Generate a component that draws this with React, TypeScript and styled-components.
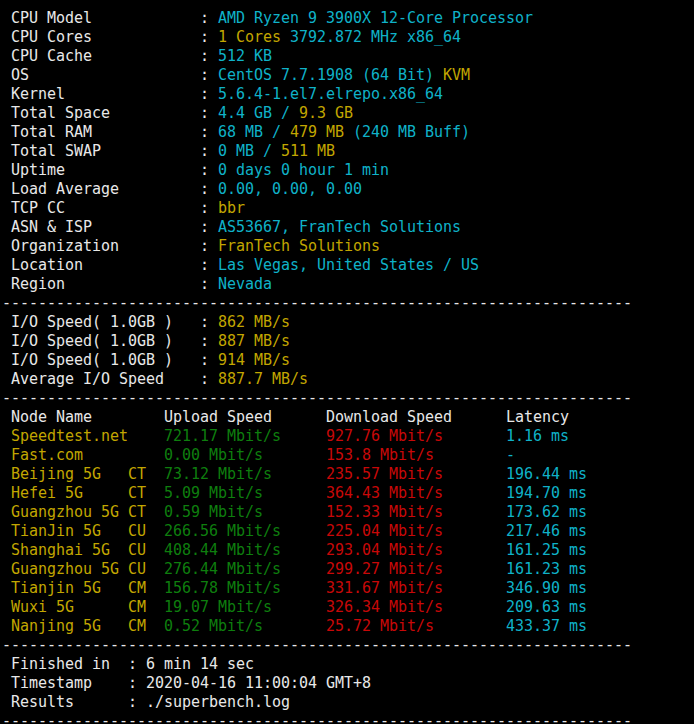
import React from "react";
import styled, { createGlobalStyle } from "styled-components";

const Global = createGlobalStyle`
  html, body { margin: 0; padding: 0; background: #000; }
  body { width: 694px; height: 724px; overflow: hidden; }
`;

type Tone = "white" | "cyan" | "yellow" | "green" | "red";

const palette: Record<Tone, string> = {
  white: "#e8e8e8",
  cyan: "#0fb2c8",
  yellow: "#c2a600",
  green: "#0e7e0e",
  red: "#c80808",
};

const Terminal = styled.div`
  background: #000;
  width: 694px;
  height: 724px;
  box-sizing: border-box;
  padding: 9px 0 0 2px;
  font-family: "DejaVu Sans Mono", "Liberation Mono", monospace;
  font-size: 15px;
  letter-spacing: -0.03px;
  line-height: 19px;
  color: ${palette.white};
  display: flex;
  flex-direction: column;
  overflow: hidden;
`;

const Line = styled.div`
  white-space: pre;
  height: 19px;
  flex-shrink: 0;
`;

const Seg = styled.span<{ $tone: Tone }>`
  color: ${(p) => palette[p.$tone]};
`;

type Part = [string, Tone];

const pad = (s: string, n: number) => s + " ".repeat(Math.max(0, n - s.length));

const info: [string, Part[]][] = [
  ["CPU Model", [["AMD Ryzen 9 3900X 12-Core Processor", "cyan"]]],
  ["CPU Cores", [["1 Cores ", "yellow"], ["3792.872 MHz x86_64", "cyan"]]],
  ["CPU Cache", [["512 KB", "cyan"]]],
  ["OS", [["CentOS 7.7.1908 (64 Bit) ", "cyan"], ["KVM", "yellow"]]],
  ["Kernel", [["5.6.4-1.el7.elrepo.x86_64", "cyan"]]],
  ["Total Space", [["4.4 GB / ", "cyan"], ["9.3 GB", "yellow"]]],
  ["Total RAM", [["68 MB / ", "cyan"], ["479 MB ", "yellow"], ["(240 MB Buff)", "cyan"]]],
  ["Total SWAP", [["0 MB / ", "cyan"], ["511 MB", "yellow"]]],
  ["Uptime", [["0 days 0 hour 1 min", "cyan"]]],
  ["Load Average", [["0.00, 0.00, 0.00", "cyan"]]],
  ["TCP CC", [["bbr", "yellow"]]],
  ["ASN & ISP", [["AS53667, FranTech Solutions", "cyan"]]],
  ["Organization", [["FranTech Solutions", "yellow"]]],
  ["Location", [["Las Vegas, United States / US", "cyan"]]],
  ["Region", [["Nevada", "cyan"]]],
];

const io: [string, string][] = [
  ["I/O Speed( 1.0GB )", "862 MB/s"],
  ["I/O Speed( 1.0GB )", "887 MB/s"],
  ["I/O Speed( 1.0GB )", "914 MB/s"],
  ["Average I/O Speed", "887.7 MB/s"],
];

const nodes: [string, string, string, string][] = [
  ["Speedtest.net", "721.17 Mbit/s", "927.76 Mbit/s", "1.16 ms"],
  ["Fast.com", "0.00 Mbit/s", "153.8 Mbit/s", "-"],
  ["Beijing 5G   CT", "73.12 Mbit/s", "235.57 Mbit/s", "196.44 ms"],
  ["Hefei 5G     CT", "5.09 Mbit/s", "364.43 Mbit/s", "194.70 ms"],
  ["Guangzhou 5G CT", "0.59 Mbit/s", "152.33 Mbit/s", "173.62 ms"],
  ["TianJin 5G   CU", "266.56 Mbit/s", "225.04 Mbit/s", "217.46 ms"],
  ["Shanghai 5G  CU", "408.44 Mbit/s", "293.04 Mbit/s", "161.25 ms"],
  ["Guangzhou 5G CU", "276.44 Mbit/s", "299.27 Mbit/s", "161.23 ms"],
  ["Tianjin 5G   CM", "156.78 Mbit/s", "331.67 Mbit/s", "346.90 ms"],
  ["Wuxi 5G      CM", "19.07 Mbit/s", "326.34 Mbit/s", "209.63 ms"],
  ["Nanjing 5G   CM", "0.52 Mbit/s", "25.72 Mbit/s", "433.37 ms"],
];

const footer: [string, string][] = [
  ["Finished in", "6 min 14 sec"],
  ["Timestamp", "2020-04-16 11:00:04 GMT+8"],
  ["Results", "./superbench.log"],
];

const Rule = () => <Line>{"-".repeat(70)}</Line>;

export default function App() {
  return (
    <>
      <Global />
      <Terminal>
        {info.map(([label, parts], i) => (
          <Line key={"i" + i}>
            {" " + pad(label, 21) + ": "}
            {parts.map(([t, tone], j) => (
              <Seg key={j} $tone={tone}>
                {t}
              </Seg>
            ))}
          </Line>
        ))}
        <Rule />
        {io.map(([label, v], i) => (
          <Line key={"o" + i}>
            {" " + pad(label, 21) + ": "}
            <Seg $tone="yellow">{v}</Seg>
          </Line>
        ))}
        <Rule />
        <Line>
          {" " + pad("Node Name", 17) + pad("Upload Speed", 18) + pad("Download Speed", 20) + "Latency"}
        </Line>
        {nodes.map(([n, up, down, lat], i) => (
          <Line key={"n" + i}>
            {" "}
            <Seg $tone="yellow">{pad(n, 17)}</Seg>
            <Seg $tone="green">{pad(up, 18)}</Seg>
            <Seg $tone="red">{pad(down, 20)}</Seg>
            <Seg $tone="cyan">{lat}</Seg>
          </Line>
        ))}
        <Rule />
        {footer.map(([label, v], i) => (
          <Line key={"f" + i}>{" " + pad(label, 13) + ": " + v}</Line>
        ))}
        <Rule />
      </Terminal>
    </>
  );
}
